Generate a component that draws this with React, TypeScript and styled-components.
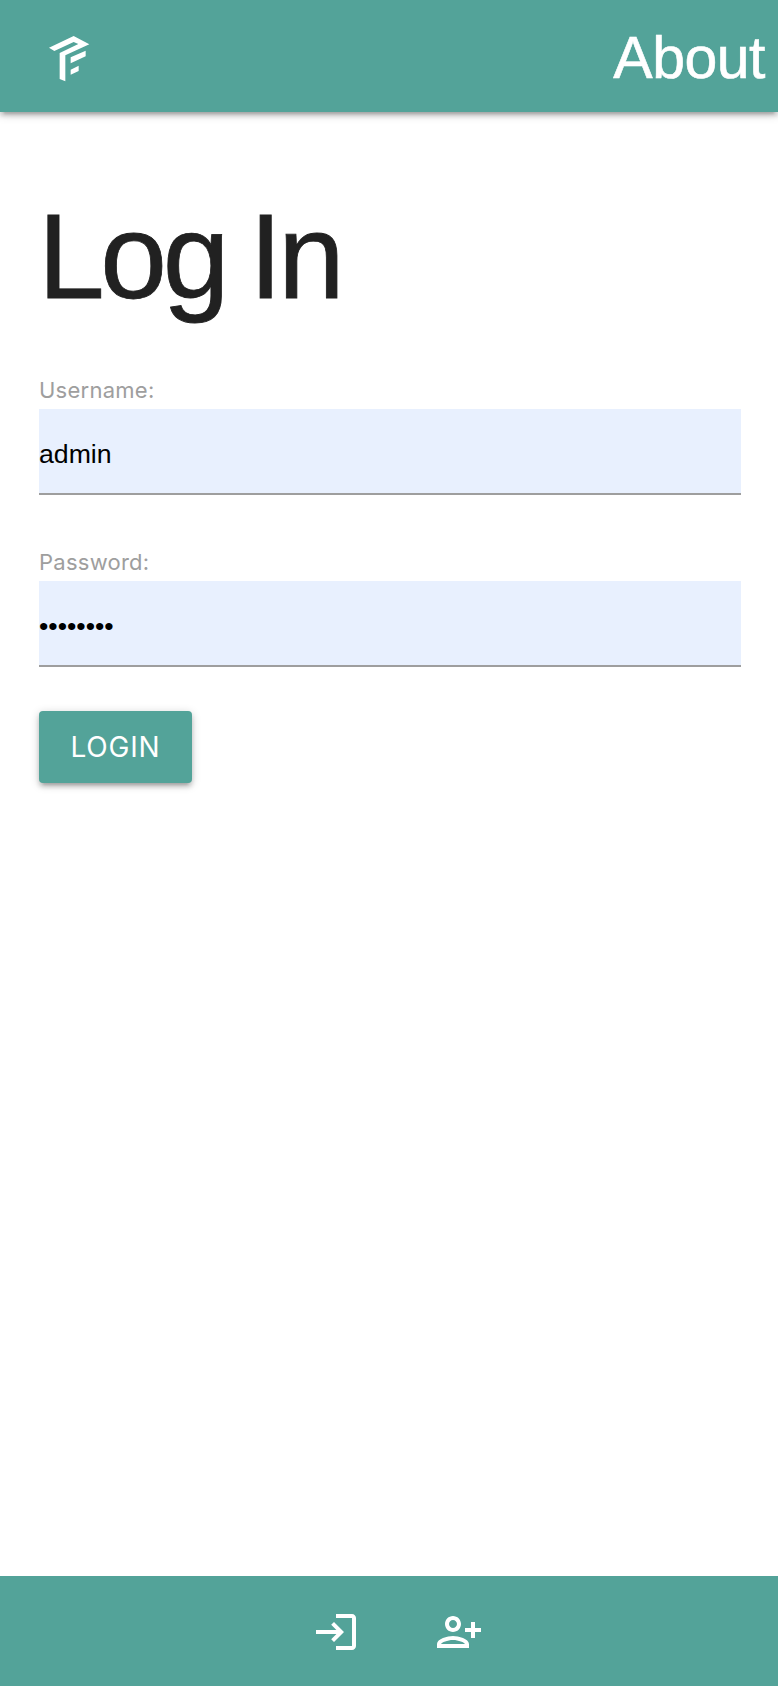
import React from "react";
import styled, { createGlobalStyle } from "styled-components";

const GlobalStyle = createGlobalStyle`
  *, *::before, *::after { box-sizing: border-box; }
  body {
    margin: 0;
    background: #fff;
    color: #212121;
    font-family: Inter, "Liberation Sans", sans-serif;
  }
`;

const Page = styled.div`
  height: 1686px;
  display: flex;
  flex-direction: column;
  overflow: hidden;
`;

const NavBar = styled.nav`
  height: 112px;
  display: flex;
  align-items: center;
  justify-content: space-between;
  padding: 0 13px 0 46px;
  background: #53a399;
  box-shadow: 0 4px 4px 0 rgba(0, 0, 0, 0.14), 0 6px 2px -4px rgba(0, 0, 0, 0.12),
    0 2px 10px 0 rgba(0, 0, 0, 0.2);
`;

const Logo = styled.svg`
  width: 48px;
  height: 52px;
  margin-top: 4px;
  fill: #fff;
`;

const NavLink = styled.span`
  padding-top: 4px;
  color: #fff;
  font-family: "Liberation Sans", Arial, sans-serif;
  font-size: 59px;
  line-height: 108px;
  letter-spacing: -0.5px;
  -webkit-text-stroke: 0.6px #fff;
`;

const Main = styled.main`
  flex: 1;
  padding: 79px 37px 0 39px;
`;

const Title = styled.h1`
  margin: 0 0 0 -1px;
  font-family: "Liberation Sans", Arial, sans-serif;
  font-size: 120px;
  line-height: 130px;
  font-weight: 400;
  letter-spacing: -4.4px;
  word-spacing: -5px;
  -webkit-text-stroke: 0.8px #212121;
`;

const Form = styled.form`
  margin-top: 56px;
`;

const Field = styled.div`
  display: flex;
  flex-direction: column;
  height: 118px;

  & + & {
    margin-top: 54px;
  }
`;

const Label = styled.label`
  height: 32px;
  color: #9e9e9e;
  font-size: 22px;
  line-height: 26px;
  letter-spacing: 0.25px;
`;

const Input = styled.input`
  width: 100%;
  height: 86px;
  padding: 6px 0 0;
  border: 0;
  border-bottom: 2px solid #9e9e9e;
  border-radius: 0;
  outline: 0;
  background: #e8f0fe;
  color: #000;
  font: 26.67px "Liberation Sans", Arial, sans-serif;
`;

const Button = styled.button`
  width: 153px;
  height: 72px;
  margin-top: 44px;
  border: 0;
  border-radius: 4px;
  background: #53a399;
  color: #fff;
  font: 400 28px Inter, sans-serif;
  letter-spacing: 0.8px;
  box-shadow: 0 4px 4px 0 rgba(0, 0, 0, 0.14), 0 6px 2px -4px rgba(0, 0, 0, 0.12),
    0 2px 10px 0 rgba(0, 0, 0, 0.2);
`;

const Footer = styled.footer`
  height: 110px;
  display: flex;
  justify-content: center;
  gap: 75px;
  padding: 32px 0 0 17px;
  background: #53a399;
`;

const Icon = styled.svg`
  width: 48px;
  height: 48px;
  fill: #fff;
`;

export default function App() {
  return (
    <Page>
      <GlobalStyle />
      <NavBar>
        <Logo viewBox="0 0 144 156">
          <path d="M9 47 83 12 130 37 58 70V148L41 141V63L97 36 83 30 25 57Z" />
          <path d="M74 76 119 56V73L74 94ZM74 113 98 101V117L74 128Z" />
        </Logo>
        <NavLink>About</NavLink>
      </NavBar>
      <Main>
        <Title>Log In</Title>
        <Form onSubmit={(e) => e.preventDefault()}>
          <Field>
            <Label htmlFor="username">Username:</Label>
            <Input id="username" type="text" defaultValue="admin" />
          </Field>
          <Field>
            <Label htmlFor="password">Password:</Label>
            <Input id="password" type="password" defaultValue="password" />
          </Field>
          <Button type="submit">LOGIN</Button>
        </Form>
      </Main>
      <Footer>
        <Icon viewBox="0 0 24 24">
          <path d="M11 7 9.6 8.4l2.6 2.6H2v2h10.2l-2.6 2.6L11 17l5-5-5-5zm9 12h-8v2h8c1.1 0 2-.9 2-2V5c0-1.1-.9-2-2-2h-8v2h8v14z" />
        </Icon>
        <Icon viewBox="0 0 24 24">
          <path d="M13 8c0-2.21-1.79-4-4-4S5 5.79 5 8s1.79 4 4 4 4-1.79 4-4zm-2 0c0 1.1-.9 2-2 2s-2-.9-2-2 .9-2 2-2 2 .9 2 2zM1 18v2h16v-2c0-2.66-5.33-4-8-4s-8 1.34-8 4zm2 0c.2-.71 3.3-2 6-2 2.69 0 5.78 1.28 6 2H3zm17-3v-3h3v-2h-3V7h-2v3h-3v2h3v3h2z" />
        </Icon>
      </Footer>
    </Page>
  );
}
